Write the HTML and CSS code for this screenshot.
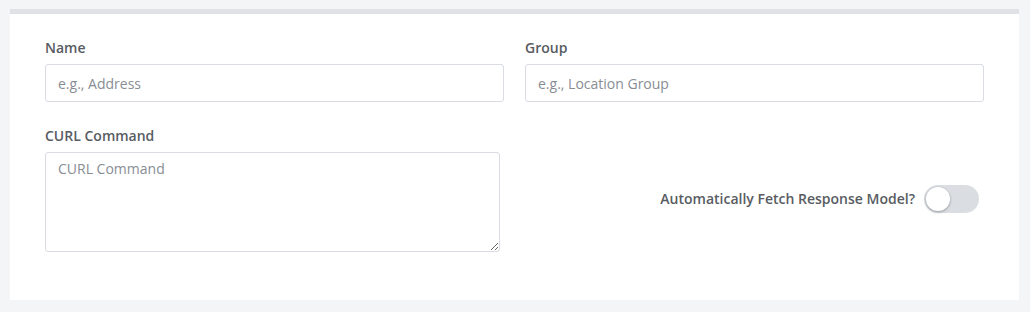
FILE: index.html
```html
<!DOCTYPE html>
<html lang="en">
    <head>
        <meta charset="UTF-8" />
        <meta name="viewport" content="width=device-width, initial-scale=1.0" />
        <title>Endpoint</title>
        <link rel="stylesheet" href="styles.css">
    </head>

    <body>
        <form class="endpoint-card">

            <!-- Первая строка: имя и группа -->
            <div class="row">
                <div class="form-group">
                    <label for="name">Name</label>
                    <input type="text" id="name" name="name" placeholder="e.g., Address">
                </div>
                <div class="form-group">
                    <label for="group">Group</label>
                    <input type="text" id="group" name="group" placeholder="e.g., Location Group">
                </div>
            </div>

            <!-- Вторая строка: curl и переключатель -->
            <div class="row">
                <div class="form-group">
                    <label for="curl">CURL Command</label>
                    <textarea id="curl" name="curl" placeholder="CURL Command"></textarea>
                </div>
                <div class="fetch-cell">
                    <span class="fetch-label">Automatically Fetch Response Model?</span>
                    <label class="switch">
                        <input type="checkbox" name="auto_fetch">
                        <span class="knob"></span>
                    </label>
                </div>
            </div>

        </form>
    </body>
</html>
```

FILE: styles.css
```css
/* Сброс */
* {
    margin: 0;
    padding: 0;
    box-sizing: border-box;
    font-family: 'Open Sans', sans-serif;
}

body {
    background-color: #f4f5f7;
    padding: 9px 11px 12px 10px;
}

/* Карточка */
.endpoint-card {
    background-color: white;
    border-top: 5px solid #e0e1e4;
    padding: 24px 35px 49px 35px;
    height: 291px;
}

/* Строки */
.row {
    display: grid;
    grid-template-columns: 1fr 1fr;
    gap: 21px;
}
.row + .row {
    margin-top: 24px;
}

.form-group {
    display: flex;
    flex-direction: column;
}
.form-group label {
    font-size: 14px;
    font-weight: 600;
    line-height: 20px;
    color: #585c62;
    margin-bottom: 6px;
}

/* Поля ввода */
input[type="text"], textarea {
    height: 38px;
    padding: 0 12px;
    border: 1px solid #d9dce2;
    border-radius: 3px;
    font-size: 14px;
    color: #333;
    outline: none;
}
textarea {
    height: 100px;
    width: 455px;
    padding: 6px 12px;
    line-height: 20px;
    resize: vertical;
}
input::placeholder, textarea::placeholder {
    color: #888d94;
}

/* Переключатель */
.fetch-cell {
    display: flex;
    justify-content: flex-end;
    align-items: center;
    gap: 9px;
    padding-top: 19px;
    padding-right: 5px;
}
.fetch-label {
    font-size: 14px;
    font-weight: 600;
    color: #585c62;
}
.switch {
    position: relative;
    display: block;
    width: 55px;
    height: 28px;
    border-radius: 14px;
    background-color: #dadde2;
    cursor: pointer;
}
.switch input {
    display: none;
}
.knob {
    position: absolute;
    top: 2px;
    left: 2px;
    width: 24px;
    height: 24px;
    border-radius: 50%;
    background-color: white;
    box-shadow: 0 1px 3px rgba(0, 0, 0, 0.3);
}
```
